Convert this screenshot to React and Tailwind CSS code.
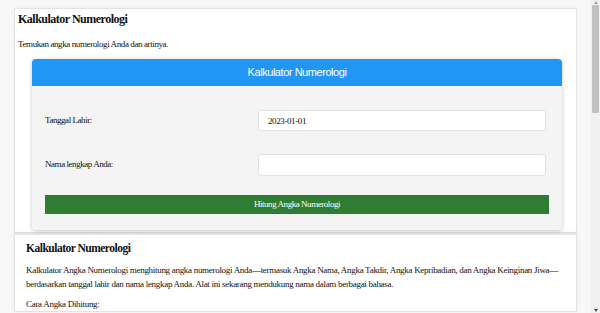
import React, { useState } from "react";

const serif = "font-['Liberation_Serif','Times_New_Roman',serif]";

const App = () => {
  const [birthDate, setBirthDate] = useState("2023-01-01");
  const [fullName, setFullName] = useState("");

  return (
    <div className={`flex h-[313px] w-[600px] overflow-hidden bg-[#f8f8f8] text-[#111] ${serif}`}>
      {/* Page content */}
      <div className="flex-1 overflow-hidden pl-[14px] pr-[14px] pt-[8px]">
        {/* Calculator section */}
        <div className="border border-[#e4e4e4] bg-white pb-[2px] shadow-[0_0_3px_rgba(0,0,0,0.06)]">
          <h1 className="pl-[3px] pt-[3px] text-[12px] leading-[14px] font-bold tracking-[-0.5px]">
            Kalkulator Numerologi
          </h1>
          <p className="mt-[13px] pl-[3px] text-[9px] leading-[10px] tracking-[-0.4px]">
            Temukan angka numerologi Anda dan artinya.
          </p>

          <div className="mt-[10px] ml-[17px] mr-[14px] overflow-hidden rounded-[4px] bg-[#f4f4f4] shadow-[0_1px_4px_rgba(0,0,0,0.22)]">
            <div className="flex h-[27px] items-center justify-center bg-[#2196f3] font-['Liberation_Sans',Arial,sans-serif] text-[11px] tracking-[-0.45px] text-white">
              Kalkulator Numerologi
            </div>
            <div className="px-[13px] pt-[24px] pb-[16px]">
              <div className="flex items-center">
                <label className="w-[213px] text-[9px] tracking-[-0.45px]">Tanggal Lahir:</label>
                <input
                  type="text"
                  value={birthDate}
                  onChange={(e) => setBirthDate(e.target.value)}
                  className="mr-[3px] h-[21px] flex-1 rounded-[3px] border border-[#e2e2e2] bg-white px-[9px] text-[9px] tracking-[-0.4px] outline-none"
                />
              </div>
              <div className="mt-[23px] flex items-center">
                <label className="w-[213px] text-[9px] tracking-[-0.45px]">Nama lengkap Anda:</label>
                <input
                  type="text"
                  value={fullName}
                  onChange={(e) => setFullName(e.target.value)}
                  className="mr-[3px] h-[22px] flex-1 rounded-[3px] border border-[#e2e2e2] bg-white px-[9px] text-[9px] outline-none"
                />
              </div>
              <button className="mt-[19px] flex h-[19px] w-full items-center justify-center bg-[#2e7d32] text-[9px] tracking-[-0.45px] text-white">
                Hitung Angka Numerologi
              </button>
            </div>
          </div>
        </div>

        {/* About section */}
        <div className="mt-[1px] border border-[#e4e4e4] bg-white pl-[11px] pr-[10px] pt-[6px] shadow-[0_-1px_3px_rgba(0,0,0,0.08)]">
          <h2 className="text-[11.5px] leading-[14px] font-bold tracking-[-0.5px]">Kalkulator Numerologi</h2>
          <p className="mt-[8px] text-[9px] leading-[14px] tracking-[-0.3px]">
            Kalkulator Angka Numerologi menghitung angka numerologi Anda—termasuk Angka Nama, Angka Takdir, Angka
            Kepribadian, dan Angka Keinginan Jiwa— berdasarkan tanggal lahir dan nama lengkap Anda. Alat ini sekarang
            mendukung nama dalam berbagai bahasa.
          </p>
          <p className="mt-[6px] text-[9px] leading-[14px] tracking-[-0.3px]">Cara Angka Dihitung:</p>
        </div>
      </div>

      {/* Scrollbar */}
      <div className="flex w-[9px] flex-col bg-[#f1f1f1]">
        <div className="flex h-[5px] items-center justify-center">
          <div className="h-0 w-0 border-x-[2px] border-b-[3px] border-x-transparent border-b-[#a3a3a3]" />
        </div>
        <div className="mx-[1px] h-[108px] rounded-[1px] bg-[#c1c1c1]" />
        <div className="flex-1" />
        <div className="flex h-[6px] items-center justify-center">
          <div className="h-0 w-0 border-x-[2px] border-t-[3px] border-x-transparent border-t-[#505050]" />
        </div>
      </div>
    </div>
  );
};

export default App;
